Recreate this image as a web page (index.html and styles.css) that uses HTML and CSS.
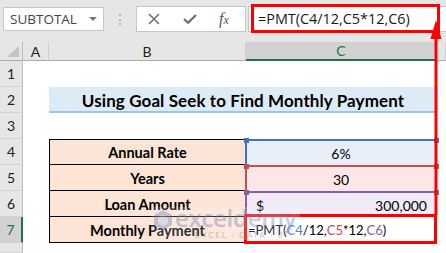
FILE: index.html
```html
<!DOCTYPE html>
<html lang="en">
<head>
    <meta charset="UTF-8">
    <title>Using Goal Seek to Find Monthly Payment</title>
    <link rel="stylesheet" href="styles.css">
</head>
<body>
    <div class="toolbar">
        <div class="name-box"><span>SUBTOTAL</span><span class="caret"></span></div>
        <div class="grip"><i></i><i></i><i></i></div>
        <div class="fn-box">
            <svg class="ic-cancel" width="12" height="12" viewBox="0 0 12 12"><path d="M1 1L11 11M11 1L1 11" stroke="#6e6e6e" stroke-width="1.6" fill="none"/></svg>
            <svg class="ic-enter" width="14" height="10" viewBox="0 0 14 10"><path d="M1 5L5 8.8L13 1" stroke="#6e6e6e" stroke-width="2.2" fill="none"/></svg>
            <span class="fx">f<i>x</i></span>
        </div>
        <div class="formula-box">
            <div class="formula">=PMT(C4/12,C5*12,C6)</div>
        </div>
    </div>

    <div class="sheet">
        <div class="corner"><span class="tri"></span></div>
        <div class="hd">A</div>
        <div class="hd">B</div>
        <div class="hd sel">C</div>
        <div class="hd"></div>

        <div class="rh">1</div><div></div><div></div><div></div><div></div>

        <div class="rh">2</div><div></div>
        <div class="title">Using Goal Seek to Find Monthly Payment</div>
        <div></div>

        <div class="rh">3</div><div></div><div></div><div></div><div></div>

        <div class="rh">4</div><div></div>
        <div class="label first">Annual Rate</div>
        <div class="val blue">6%</div>
        <div></div>

        <div class="rh">5</div><div></div>
        <div class="label">Years</div>
        <div class="val red">30</div>
        <div></div>

        <div class="rh">6</div><div></div>
        <div class="label">Loan Amount</div>
        <div class="val purple"><span>$</span><span>300,000</span></div>
        <div></div>

        <div class="rh sel">7</div><div></div>
        <div class="label">Monthly Payment</div>
        <div class="val edit">=PMT(<span class="c-blue">C4</span>/12,<span class="c-red">C5</span>*12,<span class="c-purple">C6</span>)</div>
        <div></div>

        <div class="rh"></div><div></div><div></div><div></div><div></div>
    </div>

    <div class="watermark">
        <svg width="20" height="22" viewBox="0 0 20 22"><path d="M10 1L19 6V16L10 21L1 16V6Z" fill="#8b9cc4"/><path d="M10 6L15 9V14L10 17L5 14V9Z" fill="#c3cde3"/></svg>
        <div class="wm-text">
            <span class="wm-name">exceldemy</span>
            <span class="wm-sub">EXCEL · DATA · BI</span>
        </div>
    </div>

    <svg class="arrow" width="16" height="200" viewBox="0 0 16 200">
        <path d="M8 18V197" stroke="#ff0000" stroke-width="3"/>
        <path d="M8 2L2.5 21H13.5Z" fill="#ff0000"/>
    </svg>
</body>
</html>
```

FILE: styles.css
```css
* {
    box-sizing: border-box;
}
body {
    margin: 0;
    width: 446px;
    height: 253px;
    overflow: hidden;
    position: relative;
    background: #fff;
    font-family: Lato, "Liberation Sans", sans-serif;
    color: #000;
}
.toolbar {
    height: 42px;
    background: #e6e6e6;
    display: flex;
    align-items: flex-start;
    padding-top: 6px;
}
.name-box {
    margin: 1px 0 0 3px;
    width: 101px;
    height: 24px;
    background: #fff;
    border: 1px solid #c6c6c6;
    display: flex;
    align-items: center;
    justify-content: space-between;
    padding: 0 6px;
    font-family: "Open Sans", sans-serif;
    font-size: 13.5px;
    color: #444;
}
.caret {
    width: 0;
    height: 0;
    border-left: 4px solid transparent;
    border-right: 4px solid transparent;
    border-top: 4px solid #7a7a7a;
}
.grip {
    margin: 8px 0 0 15px;
    display: flex;
    flex-direction: column;
    gap: 2.5px;
}
.grip i {
    display: block;
    width: 2px;
    height: 2px;
    background: #b4b4b4;
}
.fn-box {
    margin-left: 15px;
    width: 110px;
    height: 26px;
    background: #fff;
    border: 1px solid #c6c6c6;
    display: flex;
    align-items: center;
    padding-left: 11px;
}
.ic-enter {
    margin-left: 23px;
}
.fx {
    margin-left: 22px;
    font-family: "Liberation Serif", serif;
    font-style: italic;
    font-size: 16px;
    color: #555;
}
.fx i {
    font-size: 12px;
}
.formula-box {
    margin-left: 2px;
    flex: 1;
    height: 26px;
    background: #fff;
    border: 1px solid #c6c6c6;
    border-right: none;
}
.formula {
    margin: -3px 0 0 2px;
    width: 189px;
    height: 29px;
    border: 3px solid #ff0000;
    padding-left: 4px;
    display: flex;
    align-items: center;
    font-family: "Open Sans", sans-serif;
    font-size: 14.4px;
    color: #1a1a1a;
}

.sheet {
    display: grid;
    grid-template-columns: 23px 26px 197px 191px 9px;
    grid-template-rows: 19px repeat(7, 26px) 10px;
}
.corner {
    background: #e6e6e6;
    border-right: 1px solid #bcbcbc;
    border-bottom: 1px solid #ababab;
    display: flex;
    justify-content: flex-end;
    align-items: flex-end;
    padding: 0 3px 3px 0;
}
.tri {
    width: 0;
    height: 0;
    border-left: 12px solid transparent;
    border-bottom: 11px solid #c4c4c4;
}
.hd {
    background: #e6e6e6;
    border-right: 1px solid #d0d0d0;
    border-bottom: 1px solid #ababab;
    display: flex;
    align-items: center;
    justify-content: center;
    font-size: 14px;
    color: #222;
}
.hd.sel {
    background: #d2d2d2;
    color: #217346;
    border-bottom: 2px solid #217346;
}
.rh {
    background: #e6e6e6;
    border-right: 1px solid #bcbcbc;
    border-bottom: 1px solid #d4d4d4;
    display: flex;
    align-items: center;
    justify-content: center;
    font-size: 14px;
    color: #222;
}
.rh.sel {
    background: #d2d2d2;
    color: #217346;
    border-right: 2px solid #217346;
}
.title {
    grid-column: 3 / 5;
    background: #ddebf7;
    border-bottom: 2px solid #9dc3e6;
    display: flex;
    align-items: center;
    justify-content: center;
    padding-top: 2px;
    font-weight: 700;
    font-size: 17px;
    letter-spacing: 0.1px;
}
.label {
    background: #fce4d6;
    border: 1px solid #000;
    border-top: none;
    display: flex;
    align-items: center;
    justify-content: center;
    padding-top: 1px;
    font-weight: 700;
    font-size: 14.5px;
}
.label.first {
    border-top: 1px solid #000;
}
.val {
    --ref: #4472c4;
    position: relative;
    margin-left: -1px;
    border: 2px solid var(--ref);
    border-bottom: none;
    display: flex;
    align-items: center;
    justify-content: center;
    padding-top: 1px;
    font-size: 14px;
}
.val::before,
.val::after {
    content: "";
    position: absolute;
    top: -3px;
    width: 5px;
    height: 5px;
    background: var(--ref);
}
.val::before {
    left: -3.5px;
}
.val::after {
    right: -3.5px;
}
.val.blue {
    background: #e8eff9;
}
.val.red {
    --ref: #c0504d;
    background: #fbe7e7;
}
.val.purple {
    --ref: #8064a2;
    background: #f0ebf6;
    justify-content: space-between;
    padding: 1px 8px 0 9px;
}
.val.edit {
    margin: -3px 0 -1px -2px;
    border: 3px solid #ff0000;
    background: #fff;
    justify-content: flex-start;
    padding: 2px 0 0 1px;
    font-size: 13px;
}
.val.edit::before,
.val.edit::after {
    display: none;
}
.c-blue {
    color: #4472c4;
}
.c-red {
    color: #c0504d;
}
.c-purple {
    color: #8064a2;
}

.watermark {
    position: absolute;
    left: 151px;
    top: 207px;
    display: flex;
    align-items: flex-start;
    gap: 2px;
    padding: 2px 4px 1px 2px;
    background: rgba(255, 255, 255, 0.35);
    opacity: 0.5;
}
.wm-text {
    display: flex;
    flex-direction: column;
    line-height: 1;
}
.wm-name {
    font-family: "Open Sans", sans-serif;
    font-weight: 600;
    font-size: 24px;
    letter-spacing: -0.3px;
    color: #8b9cc4;
    margin-top: -3px;
}
.wm-sub {
    font-size: 8px;
    letter-spacing: 1.8px;
    color: #8a8a8a;
    margin: 1px 0 0 20px;
}
.arrow {
    position: absolute;
    left: 428px;
    top: 18px;
}
```
